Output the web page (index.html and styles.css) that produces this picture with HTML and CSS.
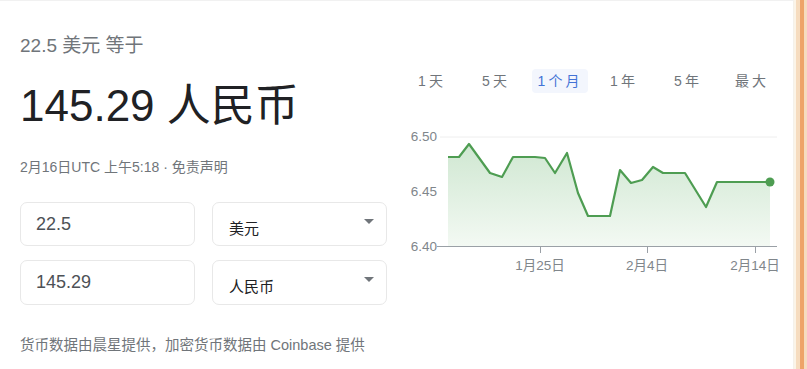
FILE: index.html
```html
<!DOCTYPE html>
<html lang="zh-CN">
<head>
    <meta charset="UTF-8">
    <meta name="viewport" content="width=device-width, initial-scale=1.0">
    <title>货币换算</title>
    <link rel="stylesheet" href="styles.css">
</head>
<body>

<div class="page">
    <div class="card">
        <div class="converter">
            <div class="from-line">22.5 美元 等于</div>
            <div class="result">145.29 人民币</div>
            <div class="stamp">2月16日UTC 上午5:18 · 免责声明</div>

            <div class="fields">
                <div class="amount">22.5</div>
                <div class="unit"><span>美元</span><i class="caret"></i></div>
                <div class="amount">145.29</div>
                <div class="unit"><span>人民币</span><i class="caret"></i></div>
            </div>

            <div class="source">货币数据由晨星提供，加密货币数据由 Coinbase 提供</div>
        </div>

        <div class="chart">
            <ul class="ranges">
                <li>1天</li>
                <li>5天</li>
                <li class="active">1个月</li>
                <li>1年</li>
                <li>5年</li>
                <li>最大</li>
            </ul>

            <svg class="plot" width="393" height="160" viewBox="0 0 393 160">
                <defs>
                    <linearGradient id="fill" x1="0" y1="0" x2="0" y2="1">
                        <stop offset="0" stop-color="#cfe7d1"/>
                        <stop offset="1" stop-color="#f3f9f3"/>
                    </linearGradient>
                </defs>
                <line x1="40" y1="17" x2="377" y2="17" stroke="#eeeeee" stroke-width="1"/>
                <polygon fill="url(#fill)" points="48,37 59,37 69,24 90,53 102,57 113,37 135,37 145,38 155,53 167,33 178,73 188,96 210,96 220,50 231,63 242,60 253,47 263,53 285,53 306,87 317,62 370,62 370,126 48,126"/>
                <polyline fill="none" stroke="#4e9d52" stroke-width="2.2" stroke-linejoin="round" points="48,37 59,37 69,24 90,53 102,57 113,37 135,37 145,38 155,53 167,33 178,73 188,96 210,96 220,50 231,63 242,60 253,47 263,53 285,53 306,87 317,62 370,62"/>
                <circle cx="370" cy="62" r="4.5" fill="#4e9d52"/>
                <line x1="37" y1="126.5" x2="377" y2="126.5" stroke="#9aa0a6" stroke-width="1"/>
                <line x1="140.5" y1="126" x2="140.5" y2="133" stroke="#9aa0a6"/>
                <line x1="247.5" y1="126" x2="247.5" y2="133" stroke="#9aa0a6"/>
                <line x1="355.5" y1="126" x2="355.5" y2="133" stroke="#9aa0a6"/>
                <g class="ylab">
                    <text x="37" y="21">6.50</text>
                    <text x="37" y="76">6.45</text>
                    <text x="37" y="131">6.40</text>
                </g>
                <g class="xlab">
                    <text x="140" y="150">1月25日</text>
                    <text x="247" y="150">2月4日</text>
                    <text x="355" y="150">2月14日</text>
                </g>
            </svg>
        </div>
    </div>
    <div class="rail"></div>
</div>

</body>
</html>
```

FILE: styles.css
```css
html, body {
    margin: 0;
    padding: 0;
    background-color: #ffffff;
}

body {
    font-family: "Liberation Sans", Arial, "Noto Sans CJK SC", sans-serif;
    color: #70757a;
}

.page {
    display: flex;
    width: 807px;
    height: 369px;
    overflow: hidden;
}

.card {
    flex: 1;
    display: flex;
    border-top: 1px solid #f1f1f1;
    border-right: 1px solid #f4f1ea;
}

.rail {
    width: 13px;
    background: linear-gradient(to right, #fbf4e8 0, #fbf4e8 2px, #f6dcbf 2px, #f6dcbf 6px, #eea468 6px, #eea468 10px, #f6dcbf 10px);
}

/* left side */

.converter {
    width: 366px;
    padding: 0 14px 0 20px;
}

.from-line {
    margin-top: 33px;
    font-size: 19px;
    line-height: 24px;
    color: #70757a;
}

.result {
    margin-top: 22px;
    font-size: 44px;
    line-height: 52px;
    color: #202124;
}

.stamp {
    margin-top: 26px;
    font-size: 14px;
    line-height: 18px;
    color: #70757a;
}

.fields {
    display: grid;
    grid-template-columns: 175px 175px;
    grid-template-rows: 44px 45px;
    column-gap: 17px;
    row-gap: 14px;
    margin-top: 26px;
}

.amount,
.unit {
    border: 1px solid #e8e8e8;
    border-radius: 7px;
    display: flex;
    align-items: center;
    box-sizing: border-box;
}

.amount {
    padding-left: 15px;
    font-size: 18px;
    color: #4d5156;
}

.unit {
    padding: 6px 12px 0 16px;
    font-size: 15px;
    color: #202124;
    justify-content: space-between;
}

.caret {
    display: block;
    width: 0;
    height: 0;
    margin-top: -12px;
    border-left: 5px solid transparent;
    border-right: 5px solid transparent;
    border-top: 5px solid #70757a;
}

.source {
    margin-top: 30px;
    font-size: 14.5px;
    line-height: 20px;
    color: #70757a;
}

/* right side */

.chart {
    width: 393px;
    display: flex;
    flex-direction: column;
}

.ranges {
    list-style-type: none;
    display: flex;
    margin: 68px 0 0;
    padding: 0;
}

.ranges li {
    width: 64px;
    text-align: center;
    font-size: 14px;
    line-height: 24px;
    letter-spacing: 3px;
    color: #70757a;
}

.ranges li.active {
    width: 56px;
    margin: 0 4px;
    border-radius: 4px;
    background-color: #f3f6fd;
    color: #4373d6;
}

.plot {
    display: block;
    margin-top: 27px;
}

.plot text {
    font-family: "Liberation Sans", Arial, "Noto Sans CJK SC", sans-serif;
    font-size: 13.5px;
    fill: #80868b;
}

.ylab text {
    text-anchor: end;
}

.xlab text {
    text-anchor: middle;
}
```
